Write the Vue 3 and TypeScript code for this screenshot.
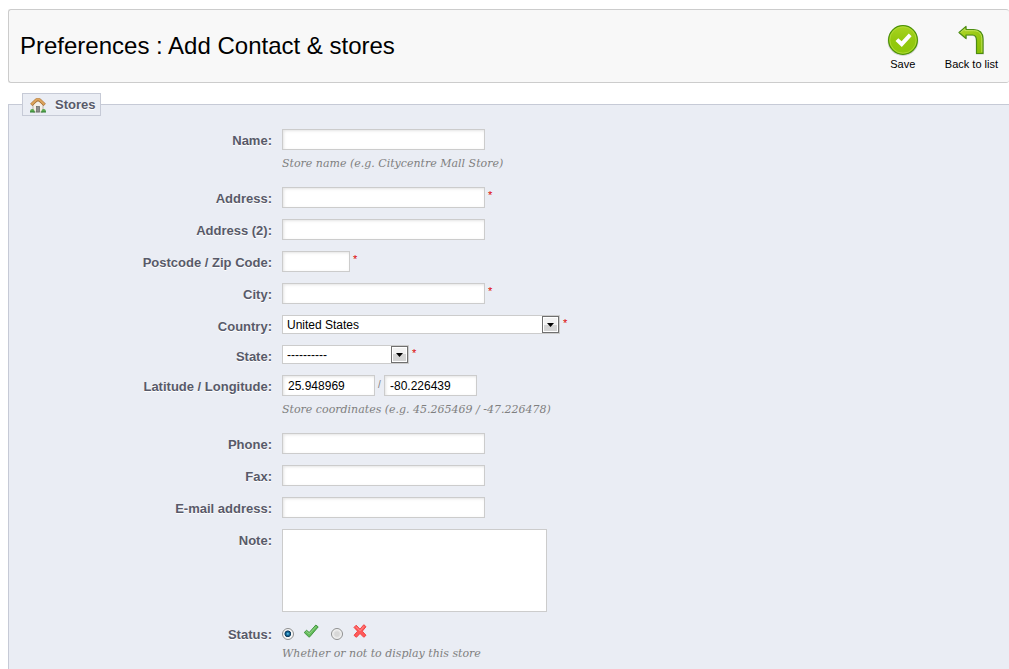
<script setup lang="ts">
import { reactive } from 'vue'

const form = reactive({
  name: '',
  address: '',
  address2: '',
  postcode: '',
  city: '',
  country: 'United States',
  state: '----------',
  latitude: '25.948969',
  longitude: '-80.226439',
  phone: '',
  fax: '',
  email: '',
  note: '',
  status: 'on',
})
</script>

<template>
  <div class="page">
    <header class="toolbar">
      <h1>Preferences : Add Contact &amp; stores</h1>
      <div class="actions">
        <button type="submit" form="store-form" class="action">
          <svg width="32" height="32" viewBox="0 0 32 32" aria-hidden="true">
            <defs>
              <linearGradient id="disc" x1="0" y1="0" x2="0" y2="1">
                <stop offset="0" stop-color="#a8d420" />
                <stop offset=".5" stop-color="#94c80e" />
                <stop offset="1" stop-color="#8cc80a" />
              </linearGradient>
            </defs>
            <ellipse cx="16" cy="17" rx="15.5" ry="15" fill="#000" opacity=".14" />
            <circle cx="16" cy="16" r="14.4" fill="url(#disc)" stroke="#4c9208" stroke-width="1.2" />
            <circle cx="16" cy="16" r="13.2" fill="none" stroke="#b6dc3c" stroke-width="1" opacity=".8" />
            <path d="M8.500 17l2.800-2.800 3.300 3 7.200-7.600 2.800 2.600-9.800 10.800z" fill="#fff" />
          </svg>
          <span>Save</span>
        </button>
        <button type="button" class="action">
          <svg width="32" height="32" viewBox="0 0 32 32" aria-hidden="true">
            <defs>
              <linearGradient id="bend" x1="0" y1="0" x2="1" y2="1">
                <stop offset="0" stop-color="#b0d62a" />
                <stop offset="1" stop-color="#84bd00" />
              </linearGradient>
            </defs>
            <path d="M4 9.500l8-6.500v3h7c6 0 10 4 10 10v14.500h-8V18c0-4-1-6-4-6h-5v4z" fill="#000" opacity=".15" />
            <path d="M4 8.500L11 2.500v3h7.500c6 0 9.500 3.500 9.500 9.500v14.500h-6.500V16.500c0-4-1-5.500-4-5.500H11v3.500z" fill="url(#bend)" stroke="#4c8d12" stroke-width="1.200" stroke-linejoin="round" />
            <path d="M5.700 8.400l4.200-3.600v1.900h8.600c5.500 0 8.300 3.100 8.300 8.300v13.300" fill="none" stroke="#cbe66a" stroke-width="1" opacity=".8" />
          </svg>
          <span>Back to list</span>
        </button>
      </div>
    </header>

    <form id="store-form" class="form" @submit.prevent>
      <fieldset>
        <legend>
          <svg width="16" height="16" viewBox="0 0 16 16" aria-hidden="true">
            <path d="M3 7.500l5-4 5 4V15H3z" fill="#f4efe6" stroke="#a89c8c" stroke-width=".7" />
            <rect x="6.500" y="9.500" width="3" height="5.500" fill="#8d8d8d" stroke="#666" stroke-width=".7" />
            <path d="M1.300 7.800L6.500 2.800h3l5.200 5" fill="none" stroke="#a56c30" stroke-width="3.200" stroke-linejoin="round" />
            <path d="M1.500 7.400L6.700 2.500h2.600l5.200 4.900" fill="none" stroke="#dda55e" stroke-width="2" stroke-linejoin="round" />
            <path d="M0 15c0-2 .8-3 2.300-3s2.300 1 2.300 3zM11.400 15c0-2 .8-3 2.300-3s2.300 1 2.300 3z" fill="#58a84d" />
            <path d="M0 15h5M11 15h5" stroke="#2f7d35" />
          </svg>
          Stores
        </legend>

        <div class="rows">
          <label class="caption" for="name">Name:</label>
          <div class="field">
            <input id="name" v-model="form.name" type="text" />
            <p class="hint">Store name (e.g. Citycentre Mall Store)</p>
          </div>

          <label class="caption" for="address">Address:</label>
          <div class="field">
            <input id="address" v-model="form.address" type="text" /><sup>*</sup>
          </div>

          <label class="caption" for="address2">Address (2):</label>
          <div class="field"><input id="address2" v-model="form.address2" type="text" /></div>

          <label class="caption" for="postcode">Postcode / Zip Code:</label>
          <div class="field">
            <input id="postcode" v-model="form.postcode" class="short" type="text" /><sup>*</sup>
          </div>

          <label class="caption" for="city">City:</label>
          <div class="field"><input id="city" v-model="form.city" type="text" /><sup>*</sup></div>

          <label class="caption" for="country">Country:</label>
          <div class="field">
            <span class="picker wide">
              <select id="country" v-model="form.country">
                <option>United States</option>
              </select>
              <span class="arrow"><svg width="7" height="4" viewBox="0 0 7 4"><path d="M0 0h7L3.500 4z" /></svg></span>
            </span><sup>*</sup>
          </div>

          <label class="caption" for="state">State:</label>
          <div class="field">
            <span class="picker">
              <select id="state" v-model="form.state">
                <option>----------</option>
              </select>
              <span class="arrow"><svg width="7" height="4" viewBox="0 0 7 4"><path d="M0 0h7L3.500 4z" /></svg></span>
            </span><sup>*</sup>
          </div>

          <label class="caption" for="latitude">Latitude / Longitude:</label>
          <div class="field">
            <input id="latitude" v-model="form.latitude" class="coord" type="text" />
            <span class="slash">/</span>
            <input v-model="form.longitude" class="coord" type="text" aria-label="Longitude" />
            <p class="hint">Store coordinates (e.g. 45.265469 / -47.226478)</p>
          </div>

          <label class="caption" for="phone">Phone:</label>
          <div class="field"><input id="phone" v-model="form.phone" type="text" /></div>

          <label class="caption" for="fax">Fax:</label>
          <div class="field"><input id="fax" v-model="form.fax" type="text" /></div>

          <label class="caption" for="email">E-mail address:</label>
          <div class="field"><input id="email" v-model="form.email" type="text" /></div>

          <label class="caption" for="note">Note:</label>
          <div class="field"><textarea id="note" v-model="form.note"></textarea></div>

          <span id="status-caption" class="caption">Status:</span>
          <div class="field" role="radiogroup" aria-labelledby="status-caption">
            <input id="status-on" v-model="form.status" type="radio" name="status" value="on" />
            <label class="mark" for="status-on" aria-label="Enabled">
              <svg width="16" height="16" viewBox="0 0 16 16">
                <path d="M1.200 9.500l2.400-2.200 2.600 2.200 6.600-7.500 2.400 1.900-8.400 9.900c-.4.400-.8.400-1.200 0z" fill="#65bd5b" stroke="#368c36" stroke-width=".9" stroke-linejoin="round" />
                <path d="M2.700 9.300l.9-.8 2.600 2.300 6.700-7.300" fill="none" stroke="#a0dc94" stroke-width=".8" />
              </svg>
            </label>
            <input id="status-off" v-model="form.status" type="radio" name="status" value="off" />
            <label class="mark" for="status-off" aria-label="Disabled">
              <svg width="16" height="16" viewBox="0 0 16 16">
                <path d="M4.200 2.200L8 6.200l3.800-4.500 2.200 2L10.300 8.200l3.700 4.100-2.200 2L8 10.500l-3.600 3.800-2.400-2L5.600 8.200 2 4.400z" fill="#ff5a5a" stroke="#ee3a3a" stroke-width=".9" stroke-linejoin="round" />
                <path d="M4 3.700L8 7.800l4-4.500" fill="none" stroke="#ff9a9a" stroke-width=".8" />
              </svg>
            </label>
            <p class="hint">Whether or not to display this store</p>
          </div>
        </div>
      </fieldset>
    </form>
  </div>
</template>

<style>
body {
  margin: 0;
  background: #fff;
}
</style>

<style scoped>
.page {
  box-sizing: border-box;
  min-height: 100vh;
  padding: 9px 0 0 8px;
  display: flex;
  flex-direction: column;
  gap: 10px;
  font-family: Arial, "Liberation Sans", sans-serif;
  font-size: 12px;
  color: #000;
}

.toolbar {
  display: flex;
  justify-content: space-between;
  align-items: center;
  box-sizing: border-box;
  min-height: 74px;
  padding: 0 11px;
  background: #f8f8f8;
  border: 1px solid #ccc;
  border-right: 0;
  border-radius: 3px;
}

h1 {
  margin: 0;
  font-size: 24px;
  line-height: 30px;
  font-weight: normal;
}

.actions {
  display: flex;
  gap: 26px;
  padding-top: 4px;
}

.action {
  display: flex;
  flex-direction: column;
  align-items: center;
  padding: 0;
  border: 0;
  background: none;
  font: inherit;
  font-size: 11px;
  line-height: 16px;
  color: #000;
  cursor: pointer;
}

.form {
  flex: 1;
  display: flex;
}

fieldset {
  flex: 1;
  min-width: 0;
  margin: 0;
  padding: 13px 0 0 13px;
  border: 1px solid #c6cad6;
  border-width: 1px 0 0 1px;
  background: #eaedf4;
}

legend {
  display: flex;
  align-items: center;
  gap: 9px;
  box-sizing: border-box;
  height: 23px;
  padding: 0 5px 0 7px;
  border: 1px solid #c6cad6;
  background: #eaedf4;
  font-size: 13px;
  line-height: 21px;
  font-weight: bold;
  color: #585a69;
  text-shadow: 0 1px 0 #fff;
}

.rows {
  display: grid;
  grid-template-columns: 250px 1fr;
  column-gap: 10px;
  row-gap: 11px;
}

.caption {
  align-self: start;
  margin-bottom: -5px;
  text-align: right;
  font-size: 13px;
  line-height: 24px;
  font-weight: bold;
  color: #585a69;
  text-shadow: 0 1px 0 #fff;
}

.field {
  display: flex;
  flex-wrap: wrap;
  align-items: flex-start;
}

input[type="text"],
textarea,
select {
  box-sizing: border-box;
  margin: 0;
  border: 1px solid #ccc;
  border-radius: 0;
  background: #fff;
  font: inherit;
  color: #000;
}

input[type="text"] {
  width: 203px;
  height: 21px;
  padding: 0 5px;
  box-shadow: inset 1px 1px 3px #e4e4e4;
}

input[type="text"].short {
  width: 68px;
}

input[type="text"].coord {
  width: 93px;
}

textarea {
  width: 265px;
  height: 83px;
  resize: none;
}

sup {
  margin-left: 3px;
  font-size: 11px;
  line-height: 17px;
  color: #d00;
}

.slash {
  width: 9px;
  text-align: center;
  font-size: 10px;
  line-height: 20px;
  color: #7f7f7f;
}

.picker {
  position: relative;
  width: 127px;
  height: 19px;
}

.picker.wide {
  width: 278px;
}

select {
  appearance: none;
  display: block;
  width: 100%;
  height: 100%;
  padding: 0 20px 0 4px;
}

.arrow {
  position: absolute;
  top: 1px;
  right: 1px;
  bottom: 1px;
  width: 15px;
  display: flex;
  align-items: center;
  justify-content: center;
  border: 1px solid #707070;
  box-shadow: inset 0 0 0 1px #fff;
  background: linear-gradient(#f2f2f2 50%, #d4d4d4 50%);
  pointer-events: none;
}

.hint {
  flex-basis: 100%;
  margin: 0;
  padding: 3px 0 2px;
  font-family: Georgia, "DejaVu Serif", serif;
  font-size: 11px;
  line-height: 21px;
  font-style: italic;
  color: #7f7f7f;
}

input[type="radio"] {
  appearance: none;
  box-sizing: border-box;
  width: 12px;
  height: 12px;
  margin: 5px 9px 0 0;
  border: 1px solid #8e8f8f;
  border-radius: 50%;
  background: radial-gradient(circle, #d8d8d8 30%, #f6f6f6 70%);
}

input[type="radio"]:checked {
  background: radial-gradient(circle at 48% 48%, #7fd4f4 0, #1b79ab 18%, #0b3558 40%, #f6f6f6 50%);
}

.mark {
  height: 16px;
  margin-right: 12px;
}

.mark svg {
  display: block;
}
</style>
